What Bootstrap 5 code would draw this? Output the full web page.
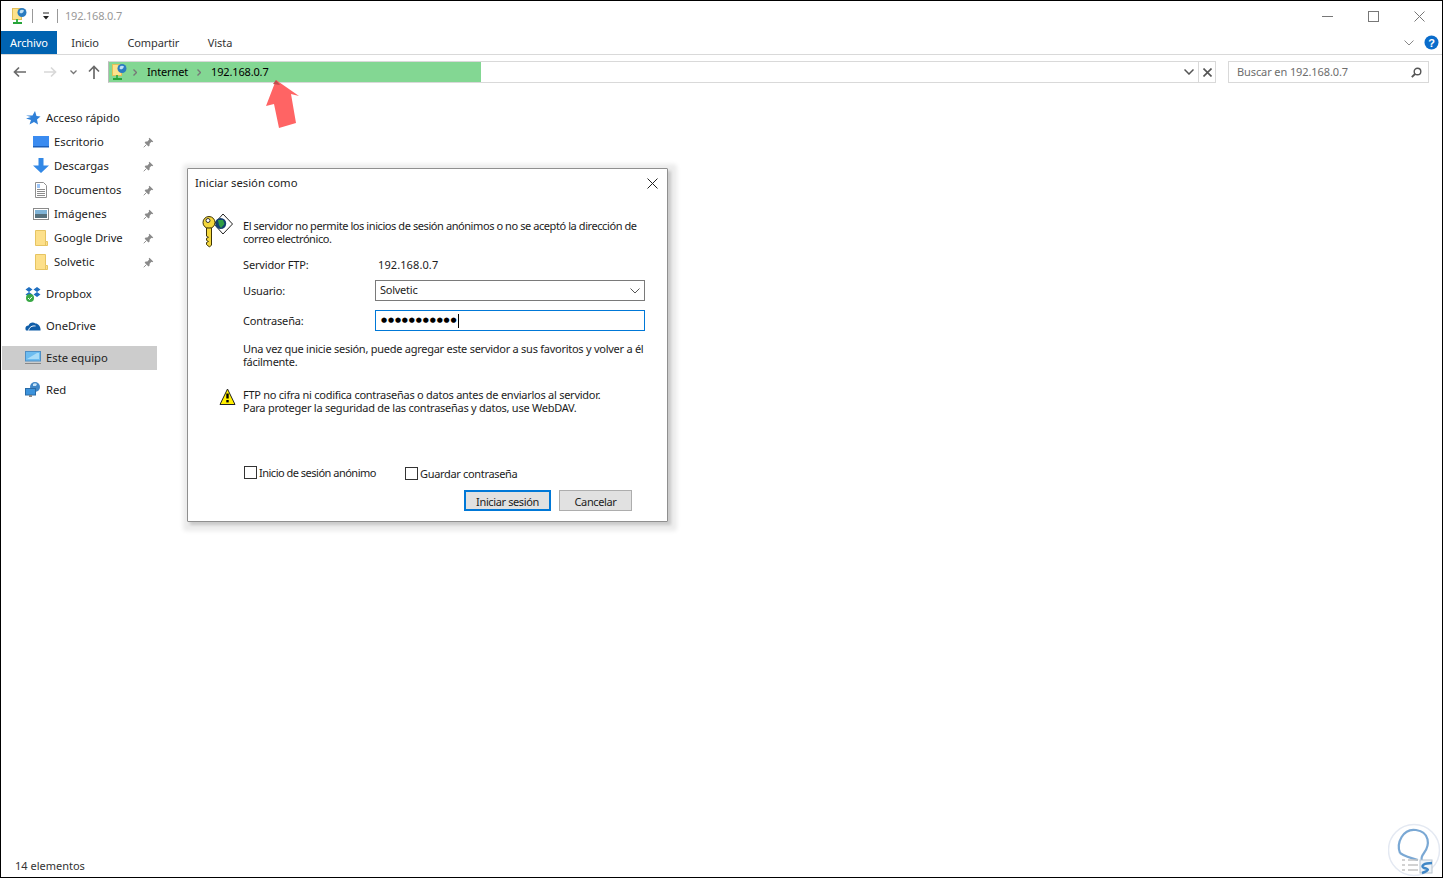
<!DOCTYPE html>
<html lang="es">
<head>
    <meta charset="UTF-8">
    <meta name="viewport" content="width=device-width, initial-scale=1.0">
    <title>192.168.0.7</title>
    <link href="https://cdn.jsdelivr.net/npm/bootstrap@5.3.0/dist/css/bootstrap.min.css" rel="stylesheet">
    <style>
        html, body { height: 100%; overflow: hidden; }
        body { font-family: "Noto Sans", sans-serif; font-size: 11px; color: #1c1c1c; background: #fff; }
        .win-frame { height: 878px; border: 1px solid #000; }
        .win-title { height: 30px; color: #999; }
        .win-title .qat-sep { width: 1px; height: 14px; background: #999; }
        .win-text { margin-left: 7px; letter-spacing: -.2px; }
        .win-ctl { width: 46px; }
        .rib-tabs { height: 24px; border-bottom: 1px solid #d9d9d9; }
        .rib-tab { padding: 0 14.3px; line-height: 23px; color: #333; height: 23px; letter-spacing: -.1px; }
        .rib-tab-file { background: #0063b1; color: #fff; padding: 0 9px; width: 56px; }
        .addr-row { height: 34px; padding-top: 6px; }
        .addr-box { width: 1108px; height: 22px; border: 1px solid #d9d9d9; border-left-color: #bbb; }
        .addr-green { width: 372px; background: #83d793; color: #000; letter-spacing: -.15px; }
        .addr-sep { width: 1px; background: #d9d9d9; }
        .search-box { width: 201px; height: 22px; border: 1px solid #d9d9d9; margin-left: 12px; padding: 0 6px 0 8px; color: #6d6d6d; letter-spacing: -.1px; }
        .side-bar { width: 156px; padding-top: 17px; font-size: 11.25px; }
        .side-row { height: 24px; padding-right: 3px; }
        .side-top { padding-left: 24px; gap: 5px; }
        .side-sub { padding-left: 32px; gap: 5px; }
        .side-group { margin-bottom: 8px; }
        .side-sel { background: #cccccc; margin-left: 1px; }
        .side-sel.side-top { padding-left: 23px; }
        .dlg-box { position: absolute; left: 30px; top: 79px; width: 481px; height: 354px; background: #fff; border: 1px solid #8f8f8f; border-radius: 1px;
            box-shadow: 3px 3px 3px rgba(0,0,0,.14), 2.5px 2.5px 4px 6px rgba(0,0,0,.08); }
        .dlg-head { height: 31px; padding: 0 8px 2px 7px; font-size: 11.3px; }
        .dlg-body { padding: 0 22px 0 14px; line-height: 13px; letter-spacing: -.26px; }
        .dlg-ind { margin-left: 41px; }
        .dlg-label { width: 132px; letter-spacing: -.15px; }
        .dlg-label-up { margin-top: -1px; }
        .dlg-msg { margin-top: 19px; letter-spacing: -.42px; }
        .dlg-key { width: 41px; height: 26px; margin-top: -6px; }
        .dlg-input.form-select, .dlg-input.form-control { font-size: 11px; color: #1c1c1c; border-radius: 0; width: 270px; min-height: 0; line-height: 13px; padding: 0 0 0 4px; }
        .dlg-input.form-select { height: 21px; padding-bottom: 2px; letter-spacing: -.25px; border: 1px solid #7a7a7a; background-size: 10px 6px; background-position: right 4px center;
            background-image: url("data:image/svg+xml,%3csvg xmlns='http://www.w3.org/2000/svg' viewBox='0 0 10 6'%3e%3cpath fill='none' stroke='%23555' d='M.5.5 5 5 9.5.5'/%3e%3c/svg%3e"); }
        .dlg-input.form-control { height: 21px; border: 1px solid #0078d7; padding-left: 5px; }
        .pass-dots { font-family: "DejaVu Sans", sans-serif; font-size: 7px; letter-spacing: .85px; color: #000; }
        .pass-caret { display: inline-block; width: 1px; height: 14px; background: #000; }
        .dlg-check.form-check-input { width: 13px; height: 13px; margin: 0; border: 1px solid #333; border-radius: 0; }
        .dlg-lbl-anon { letter-spacing: -.5px; }
        .dlg-lbl-save { letter-spacing: -.33px; padding-top: 1px; }
        .dlg-btn.btn { font-size: 11px; line-height: 13px; letter-spacing: -.38px; border-radius: 0; height: 21px; padding: 1px 0 0 0; color: #1c1c1c; background: #e1e1e1; border: 1px solid #adadad; }
        .dlg-btn-main.btn { width: 87px; border: 2px solid #0078d7; }
        .dlg-btn-alt { width: 73px; }
        .status-bar { height: 22px; padding-left: 14px; color: #333; }
        .wm-mark { position: absolute; right: 0; bottom: 0; }
        .red-arrow { position: absolute; left: 263px; top: 78px; }
    </style>
</head>
<body>
    <svg width="0" height="0" class="position-absolute">
        <symbol id="i-netfolder" viewBox="0 0 15 16">
            <rect x=".5" y=".5" width="9" height="11" fill="#fde28b" stroke="#e2bf58"/>
            <circle cx="10" cy="4.5" r="4.5" fill="#2b7cc0"/>
            <path d="M8 2.500c1-1 3-1 4 0l-1 2-2 1-1.500-1z" fill="#bfe0f5"/>
            <rect x="4" y="11" width="2" height="3" fill="#3db14c"/>
            <rect x="1" y="14" width="9" height="2" fill="#27a53a"/>
        </symbol>
        <symbol id="i-pin" viewBox="0 0 12 12">
            <path d="M7 .8 11.200 5 10 5.800 9.200 5.200 7.200 7.400 7.200 9.400 6 10.400 1.800 6.200 2.800 5 4.800 5 6.800 2.800 6.200 2z" fill="#8a8a8a"/>
            <path d="M3.600 8.400.8 11.200" stroke="#8a8a8a"/>
        </symbol>
        <symbol id="i-folder" viewBox="0 0 16 16">
            <path d="M2.500.500h10v11h2v4h-12z" fill="#fde08a" stroke="#e6c462"/>
            <path d="M12.500 11.500v4" stroke="#e6c462"/>
        </symbol>
    </svg>

    <div class="win-frame position-relative d-flex flex-column">
        <div class="win-title d-flex align-items-center">
            <svg width="15" height="16" style="margin-left:11px"><use href="#i-netfolder"/></svg>
            <span class="qat-sep" style="margin-left:5px"></span>
            <svg width="8" height="8" viewBox="0 0 8 8" style="margin-left:9px"><path d="M1 1h6" stroke="#222"/><path d="M1 4h6L4 7.500z" fill="#222"/></svg>
            <span class="qat-sep" style="margin-left:7px"></span>
            <span class="win-text">192.168.0.7</span>
            <div class="d-flex ms-auto align-items-center">
                <div class="win-ctl d-flex justify-content-center"><svg width="11" height="11"><path d="M0 5.500h11" stroke="#777"/></svg></div>
                <div class="win-ctl d-flex justify-content-center"><svg width="11" height="11"><rect x=".5" y=".5" width="10" height="10" fill="none" stroke="#777"/></svg></div>
                <div class="win-ctl d-flex justify-content-center"><svg width="11" height="11"><path d="M.5.500l10 10M10.500.500l-10 10" stroke="#777"/></svg></div>
            </div>
        </div>

        <div class="rib-tabs d-flex align-items-start">
            <div class="rib-tab rib-tab-file">Archivo</div>
            <div class="rib-tab">Inicio</div>
            <div class="rib-tab">Compartir</div>
            <div class="rib-tab">Vista</div>
            <div class="ms-auto d-flex align-items-center" style="height:23px">
                <svg width="10" height="6"><path d="M.5.500 5 5 9.500.500" fill="none" stroke="#888"/></svg>
                <svg width="15" height="15" viewBox="0 0 15 15" style="margin:0 3px 0 10px">
                    <circle cx="7.500" cy="7.500" r="7" fill="#0a6ccb"/>
                    <text x="7.500" y="11.500" text-anchor="middle" font-family="Liberation Sans" font-weight="700" font-size="11" fill="#fff">?</text>
                </svg>
            </div>
        </div>

        <div class="addr-row d-flex align-items-start">
            <div class="d-flex align-items-center" style="width:107px;height:22px">
                <svg width="14" height="12" viewBox="0 0 14 12" style="margin-left:12px"><path d="M13 6H2M6 1.500 1.500 6 6 10.500" fill="none" stroke="#6a6a6a" stroke-width="1.700"/></svg>
                <svg width="14" height="12" viewBox="0 0 14 12" style="margin-left:16px"><path d="M1 6h11M8 1.500 12.500 6 8 10.500" fill="none" stroke="#d8d8d8" stroke-width="1.700"/></svg>
                <svg width="7" height="5" viewBox="0 0 7 5" style="margin-left:13px"><path d="M.5.500 3.500 3.500 6.500.500" fill="none" stroke="#777" stroke-width="1.300"/></svg>
                <svg width="12" height="14" viewBox="0 0 12 14" style="margin-left:11px"><path d="M6 14V2M1 6.500 6 1.500l5 5" fill="none" stroke="#6a6a6a" stroke-width="1.700"/></svg>
            </div>
            <div class="addr-box d-flex">
                <div class="addr-green d-flex align-items-center">
                    <svg width="15" height="16" style="margin-left:3px"><use href="#i-netfolder"/></svg>
                    <svg width="4" height="7" viewBox="0 0 4 7" style="margin-left:6px"><path d="M.5.500 3.500 3.500.5 6.500" fill="none" stroke="#777" stroke-width="1.400"/></svg>
                    <span style="margin-left:10px">Internet</span>
                    <svg width="4" height="7" viewBox="0 0 4 7" style="margin-left:9px"><path d="M.5.500 3.500 3.500.5 6.500" fill="none" stroke="#777" stroke-width="1.400"/></svg>
                    <span style="margin-left:10px">192.168.0.7</span>
                </div>
                <div class="ms-auto d-flex align-items-center">
                    <svg width="10" height="6" class="me-1"><path d="M.5.500 5 5 9.500.500" fill="none" stroke="#555" stroke-width="1.500"/></svg>
                    <span class="addr-sep align-self-stretch"></span>
                    <svg width="9" height="9" style="margin:0 3px 0 4px"><path d="M.5.500l8 8M8.500.500l-8 8" stroke="#555" stroke-width="1.600"/></svg>
                </div>
            </div>
            <div class="search-box d-flex align-items-center justify-content-between">
                <span>Buscar en 192.168.0.7</span>
                <svg width="11" height="11" viewBox="0 0 11 11"><circle cx="6.500" cy="4.500" r="3.300" fill="none" stroke="#555" stroke-width="1.400"/><path d="M4 7 .8 10.200" stroke="#555" stroke-width="1.800"/></svg>
            </div>
        </div>

        <svg class="red-arrow" width="38" height="52" viewBox="0 0 38 52">
            <path d="M12 1 35 17 27 15 32 44 15 49 10 25 2 27z" fill="#ff6464"/>
            <path d="M12 1 16 6 9 5z" fill="#c0504d"/>
        </svg>

        <div class="d-flex flex-grow-1 position-relative">
            <nav class="side-bar flex-shrink-0">
                <div class="side-group">
                    <div class="side-row side-top d-flex align-items-center">
                        <svg width="16" height="16" viewBox="0 0 16 16"><path d="M10 1 11.500 6 15.500 6.500 12 9.500 13 14.500 9 12 4.500 14.500 6 10 1 8.500 6 7 1 5.500 7.500 5.500z" fill="#2f80d8"/></svg>
                        <span>Acceso rápido</span>
                    </div>
                    <div class="side-row side-sub d-flex align-items-center">
                        <svg width="16" height="16" viewBox="0 0 16 16"><rect x="0" y="2" width="16" height="11" fill="#3a8bf0"/><rect x="0" y="12" width="16" height="1.500" fill="#1b5eb8"/></svg>
                        <span>Escritorio</span>
                        <svg width="11" height="11" class="ms-auto"><use href="#i-pin"/></svg>
                    </div>
                    <div class="side-row side-sub d-flex align-items-center">
                        <svg width="16" height="16" viewBox="0 0 16 16"><path d="M5.500 0h5v7.500H16L8 15 0 7.500h5.500z" fill="#3288e6"/></svg>
                        <span>Descargas</span>
                        <svg width="11" height="11" class="ms-auto"><use href="#i-pin"/></svg>
                    </div>
                    <div class="side-row side-sub d-flex align-items-center">
                        <svg width="16" height="16" viewBox="0 0 16 16"><path d="M2.500.500h8l3 3v12h-11z" fill="#fff" stroke="#8f8f8f"/><path d="M4 3h3M4 5h3" stroke="#3a8bf0"/><path d="M4 7.500h8M4 9.500h8M4 11.500h8M4 13.500h8" stroke="#8b8b8b"/></svg>
                        <span>Documentos</span>
                        <svg width="11" height="11" class="ms-auto"><use href="#i-pin"/></svg>
                    </div>
                    <div class="side-row side-sub d-flex align-items-center">
                        <svg width="16" height="16" viewBox="0 0 16 16"><rect x=".5" y="2.500" width="15" height="11" fill="#fff" stroke="#8a8a8a"/><rect x="2" y="4" width="12" height="4" fill="#7fb3d6"/><rect x="2" y="8" width="12" height="4" fill="#56707c"/></svg>
                        <span>Imágenes</span>
                        <svg width="11" height="11" class="ms-auto"><use href="#i-pin"/></svg>
                    </div>
                    <div class="side-row side-sub d-flex align-items-center">
                        <svg width="16" height="16"><use href="#i-folder"/></svg>
                        <span>Google Drive</span>
                        <svg width="11" height="11" class="ms-auto"><use href="#i-pin"/></svg>
                    </div>
                    <div class="side-row side-sub d-flex align-items-center">
                        <svg width="16" height="16"><use href="#i-folder"/></svg>
                        <span>Solvetic</span>
                        <svg width="11" height="11" class="ms-auto"><use href="#i-pin"/></svg>
                    </div>
                </div>
                <div class="side-group">
                    <div class="side-row side-top d-flex align-items-center">
                        <svg width="16" height="16" viewBox="0 0 16 16"><path d="M4 1 7.500 3.500 4 6 .5 3.500zM12 1l3.500 2.500L12 6 8.500 3.500zM4 6l3.500 2.500L4 11 .5 8.500zM12 6l3.500 2.500L12 11 8.500 8.500z" fill="#1f6fc0"/><circle cx="5" cy="12" r="4" fill="#39a845"/><path d="M3 12l1.500 1.500L7 10.800" fill="none" stroke="#fff"/></svg>
                        <span>Dropbox</span>
                    </div>
                </div>
                <div class="side-group">
                    <div class="side-row side-top d-flex align-items-center">
                        <svg width="16" height="16" viewBox="0 0 16 16"><path d="M1 12.500C-.500 10 1 7.500 3.500 7.500 4.500 4.500 8 3.500 10.500 5.500 13 5.500 16 8.500 15.500 12.500z" fill="#0f5da8"/><path d="M3.500 12.500C4.500 9 7 7.500 10.500 8" fill="none" stroke="#fff"/></svg>
                        <span>OneDrive</span>
                    </div>
                </div>
                <div class="side-group">
                    <div class="side-row side-top side-sel d-flex align-items-center">
                        <svg width="16" height="16" viewBox="0 0 16 16"><rect x=".5" y="1.500" width="15" height="9.500" fill="#6cbcf0" stroke="#4f8fc4"/><path d="M2 9 12 3h2v6z" fill="#a8dcf8"/><rect x="0" y="13" width="16" height="1" fill="#888"/></svg>
                        <span>Este equipo</span>
                    </div>
                </div>
                <div class="side-group">
                    <div class="side-row side-top d-flex align-items-center">
                        <svg width="16" height="16" viewBox="0 0 16 16"><circle cx="10" cy="5" r="5" fill="#3f86c6"/><path d="M8 2c1-1 3-1 4 0l-1 2-3 0z" fill="#c9e4f6"/><rect x=".5" y="6.500" width="10" height="6.500" fill="#3c93dc" stroke="#2a6aa5"/><rect x="4" y="13" width="3" height="2" fill="#888"/></svg>
                        <span>Red</span>
                    </div>
                </div>
            </nav>

            <div class="flex-grow-1 position-relative">
                <div class="dlg-box d-flex flex-column">
                    <div class="dlg-head d-flex align-items-center justify-content-between">
                        <span>Iniciar sesión como</span>
                        <svg width="11" height="11" style="margin-right:1px"><path d="M.5.500l10 10M10.500.500l-10 10" stroke="#222"/></svg>
                    </div>
                    <div class="dlg-body d-flex flex-column">
                        <div class="dlg-msg d-flex">
                            <div class="dlg-key flex-shrink-0">
                                <svg width="31" height="35" viewBox="0 0 31 35">
                                    <path d="M21 1 30.500 11 21 21 12 11z" fill="#fff" stroke="#222"/>
                                    <circle cx="18.700" cy="10.500" r="5.500" fill="#13406e"/>
                                    <path d="M16 7h5l1.500 4-3.500 4-2-3z" fill="#2f9e44"/>
                                    <circle cx="7" cy="9.500" r="6" fill="#f4d73c" stroke="#3d3408"/>
                                    <circle cx="6" cy="7.500" r="2" fill="#fff" stroke="#333"/>
                                    <path d="M4.500 15h5v17l-2 2-3-2.500v-2l2-1-2-1.200v-2l2-1-2-1.200z" fill="#f4d73c" stroke="#3d3408"/>
                                </svg>
                            </div>
                            <div>El servidor no permite los inicios de sesión anónimos o no se aceptó la dirección de correo electrónico.</div>
                        </div>
                        <div class="dlg-ind d-flex" style="margin-top:13px">
                            <div class="dlg-label">Servidor FTP:</div>
                            <div style="margin-left:3px;letter-spacing:.1px">192.168.0.7</div>
                        </div>
                        <div class="dlg-ind d-flex align-items-center" style="margin-top:9px">
                            <label class="dlg-label" for="dlgUser">Usuario:</label>
                            <select id="dlgUser" class="form-select dlg-input"><option>Solvetic</option></select>
                        </div>
                        <div class="dlg-ind d-flex align-items-center" style="margin-top:9px">
                            <div class="dlg-label dlg-label-up">Contraseña:</div>
                            <div class="form-control dlg-input d-flex align-items-center"><span class="pass-dots">●●●●●●●●●●●</span><span class="pass-caret"></span></div>
                        </div>
                        <div class="dlg-ind" style="margin-top:11px">Una vez que inicie sesión, puede agregar este servidor a sus favoritos y volver a él fácilmente.</div>
                        <div class="d-flex" style="margin-top:20px;padding-left:17px">
                            <div class="flex-shrink-0" style="width:24px">
                                <svg width="17" height="18" viewBox="0 0 17 18"><path d="M8.500 1 16 16.500H1z" fill="#ffef00" stroke="#222" stroke-linejoin="round"/><path d="M8.500 5.500v5" stroke="#000" stroke-width="2.400"/><rect x="7.300" y="12" width="2.400" height="2.400" fill="#000"/></svg>
                            </div>
                            <div>FTP no cifra ni codifica contraseñas o datos antes de enviarlos al servidor.<br>Para proteger la seguridad de las contraseñas y datos, use WebDAV.</div>
                        </div>
                        <div class="d-flex" style="margin-top:51px;margin-left:42px">
                            <div class="d-flex align-items-center" style="width:161px;gap:2px">
                                <input class="form-check-input dlg-check" type="checkbox" id="chkAnon">
                                <label for="chkAnon" class="dlg-lbl-anon">Inicio de sesión anónimo</label>
                            </div>
                            <div class="d-flex align-items-center" style="gap:2px;margin-top:1px">
                                <input class="form-check-input dlg-check" type="checkbox" id="chkSave">
                                <label for="chkSave" class="dlg-lbl-save">Guardar contraseña</label>
                            </div>
                        </div>
                        <div class="d-flex justify-content-end gap-2" style="margin-top:10px;margin-right:13px">
                            <button type="button" class="btn dlg-btn dlg-btn-main">Iniciar sesión</button>
                            <button type="button" class="btn dlg-btn dlg-btn-alt">Cancelar</button>
                        </div>
                    </div>
                </div>
            </div>
        </div>

        <div class="status-bar d-flex align-items-center">14 elementos</div>

        <svg class="wm-mark" width="54" height="56" viewBox="0 0 54 56">
            <circle cx="26" cy="29" r="25.500" fill="#fff" fill-opacity=".6" stroke="#e4e9f2" stroke-width="1.500"/>
            <path d="M12 32C8 22 15 7 28 9 42 11 42 24 36 32 33 36 33 38 34 40M12 32C18 36 26 38 30 39" fill="none" stroke="#7aa8d4" stroke-width="2.200"/>
            <path d="M14 39h3M20 39h10M14 44h3M20 44h10M14 49h3M20 49h10" stroke="#c4c4c4" stroke-width="1.500"/>
            <rect x="32" y="39" width="12" height="13" fill="#eef3f8" stroke="#b8c4cf"/>
            <path d="M44 42C36 42 32 45 36 47 40 48 43 49 34 52" fill="none" stroke="#3f86c6" stroke-width="2.400"/>
        </svg>
    </div>

    <script src="https://cdn.jsdelivr.net/npm/bootstrap@5.3.0/dist/js/bootstrap.bundle.min.js"></script>
</body>
</html>
